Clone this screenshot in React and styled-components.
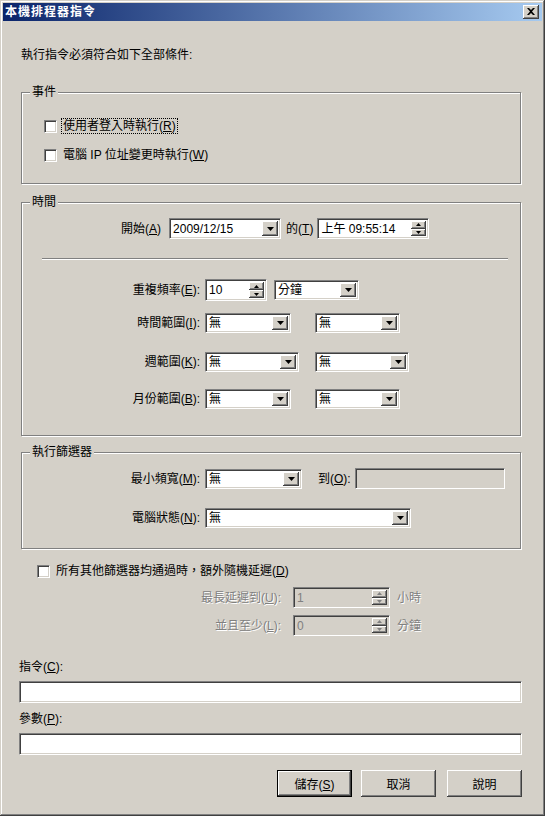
import React from 'react';
import styled, { createGlobalStyle } from 'styled-components';

const FONT = `"Liberation Sans", "Noto Sans CJK TC", sans-serif`;

const GlobalStyle = createGlobalStyle`
  html, body { margin: 0; padding: 0; background: #d4d0c8; }
  body { font-family: ${FONT}; font-size: 12px; color: #000; }
  * { box-sizing: border-box; }
`;

const raised = `
  box-shadow: inset -1px -1px 0 #404040, inset 1px 1px 0 #fff,
    inset -2px -2px 0 #808080, inset 2px 2px 0 #d4d0c8;
`;

const Window = styled.div`
  width: 545px;
  height: 816px;
  padding: 3px;
  background: #d4d0c8;
  box-shadow: inset -1px -1px 0 #404040, inset 1px 1px 0 #d4d0c8,
    inset -2px -2px 0 #808080, inset 2px 2px 0 #fff;
  display: flex;
  flex-direction: column;
  font-family: ${FONT};
  font-size: 12px;
  line-height: 14px;
  color: #000;
`;

const TitleBar = styled.div`
  height: 18px;
  flex: none;
  display: flex;
  align-items: center;
  justify-content: space-between;
  padding: 0 3px 0 2px;
  background: linear-gradient(90deg, #0a246a, #a6caf0);
`;

const Title = styled.span`
  color: #fff;
  font-weight: bold;
  font-size: 12px;
  letter-spacing: 1px;
  line-height: 18px;
`;

const CloseButton = styled.div`
  width: 16px;
  height: 14px;
  background: #d4d0c8;
  ${raised}
  display: flex;
  align-items: center;
  justify-content: center;
  padding-bottom: 1px;
`;

const Body = styled.div`
  flex: 1;
  display: flex;
  flex-direction: column;
  padding: 0 20px 0 16px;
`;

const Intro = styled.div`
  margin-top: 27px;
  padding-left: 2px;
`;

const Group = styled.fieldset`
  margin: ${(p) => p.$mt}px 1px 0 2px;
  padding: ${(p) => p.$pt}px 0 ${(p) => p.$pb}px 0;
  border: 1px solid #808080;
  box-shadow: 1px 1px 0 #fff, inset 1px 1px 0 #fff;
  min-width: 0;
`;

const Legend = styled.legend`
  margin-left: 8px;
  padding: 0 2px;
  line-height: 14px;
  background: #d4d0c8;
`;

const CheckList = styled.div`
  display: flex;
  flex-direction: column;
  gap: 13px;
`;

const CheckRow = styled.label`
  display: flex;
  align-items: center;
  gap: 5px;
  height: 16px;
  margin-top: ${(p) => p.$mt || 0}px;
  padding-left: ${(p) => p.$indent}px;
`;

const Check = styled.span`
  flex: none;
  width: 13px;
  height: 13px;
  background: #fff;
  border-top: 1px solid #808080;
  border-left: 1px solid #808080;
  border-right: 1px solid #fff;
  border-bottom: 1px solid #fff;
  box-shadow: inset 1px 1px 0 #404040, inset -1px -1px 0 #d4d0c8;
`;

const CheckText = styled.span`
  padding: 0 1px;
  outline: ${(p) => (p.$focused ? '1px dotted #000' : 'none')};
  outline-offset: 0;
`;

const Row = styled.div`
  display: flex;
  align-items: center;
  height: ${(p) => p.$h || 21}px;
  margin-top: ${(p) => p.$mt || 0}px;
  padding-left: ${(p) => p.$indent || 0}px;
`;

const RowLabel = styled.span`
  flex: none;
  width: ${(p) => p.$w}px;
  text-align: right;
  margin-right: ${(p) => p.$gap}px;
  white-space: nowrap;
  color: ${(p) => (p.$disabled ? '#808080' : '#000')};
  text-shadow: ${(p) => (p.$disabled ? '1px 1px 0 #fff' : 'none')};
`;

const Inline = styled.span`
  flex: none;
  margin: 0 ${(p) => p.$mr || 0}px 0 ${(p) => p.$ml || 0}px;
  white-space: nowrap;
  color: ${(p) => (p.$disabled ? '#808080' : '#000')};
  text-shadow: ${(p) => (p.$disabled ? '1px 1px 0 #fff' : 'none')};
`;

const Sunken = styled.div`
  flex: none;
  width: ${(p) => (p.$w ? `${p.$w}px` : 'auto')};
  height: ${(p) => p.$h || 21}px;
  margin-left: ${(p) => p.$ml || 0}px;
  display: flex;
  align-items: stretch;
  padding: 2px;
  background: ${(p) => (p.$disabled ? '#d4d0c8' : '#fff')};
  border-top: 1px solid #808080;
  border-left: 1px solid #808080;
  border-right: 1px solid #fff;
  border-bottom: 1px solid #fff;
  box-shadow: inset 1px 1px 0 #404040, inset -1px -1px 0 #d4d0c8;
`;

const FieldText = styled.span`
  flex: 1;
  display: flex;
  align-items: center;
  padding-left: 1px;
  white-space: nowrap;
  overflow: hidden;
  color: ${(p) => (p.$disabled ? '#808080' : '#000')};
`;

const DropButton = styled.span`
  flex: none;
  width: 16px;
  background: #d4d0c8;
  ${raised}
  display: flex;
  align-items: center;
  justify-content: center;
`;

const SpinColumn = styled.span`
  flex: none;
  width: 15px;
  display: flex;
  flex-direction: column;
`;

const SpinHalf = styled.span`
  flex: 1;
  background: #d4d0c8;
  ${raised}
  display: flex;
  align-items: center;
  justify-content: center;
`;

const WideField = styled.div`
  height: 22px;
  margin-top: ${(p) => p.$mt}px;
  background: #fff;
  border-top: 1px solid #808080;
  border-left: 1px solid #808080;
  border-right: 1px solid #fff;
  border-bottom: 1px solid #fff;
  box-shadow: inset 1px 1px 0 #404040, inset -1px -1px 0 #d4d0c8;
`;

const FieldLabel = styled.div`
  margin-top: ${(p) => p.$mt}px;
`;

const Separator = styled.div`
  margin: 19px 12px 0 20px;
  height: 2px;
  border-top: 1px solid #808080;
  border-bottom: 1px solid #fff;
`;

const ButtonBar = styled.div`
  margin-top: 15px;
  display: flex;
  justify-content: flex-end;
  gap: 9px;
`;

const Button = styled.button`
  width: 75px;
  height: 27px;
  margin-left: ${(p) => p.$ml || 0}px;
  padding: 0;
  font-family: ${FONT};
  font-size: 12px;
  color: #000;
  background: #d4d0c8;
  border: ${(p) => (p.$default ? '1px solid #000' : 'none')};
  ${raised}
`;

const Acc = ({ t, k, colon }) => (
  <>
    {t}(<u>{k}</u>){colon ? ':' : ''}
  </>
);

const DownArrow = () => (
  <svg width="7" height="4" viewBox="0 0 7 4">
    <path d="M0 0h7L3.5 4z" fill="#000" />
  </svg>
);

const Combo = ({ w, h = 20, value, ml }) => (
  <Sunken $w={w} $h={h} $ml={ml}>
    <FieldText>{value}</FieldText>
    <DropButton>
      <DownArrow />
    </DropButton>
  </Sunken>
);

const Spin = ({ w, h = 21, value, ml, disabled }) => {
  const c = disabled ? '#808080' : '#000';
  return (
    <Sunken $w={w} $h={h} $ml={ml} $disabled={disabled}>
      <FieldText $disabled={disabled}>{value}</FieldText>
      <SpinColumn>
        <SpinHalf>
          <svg width="5" height="3" viewBox="0 0 5 3">
            <path d="M2.5 0L5 3H0z" fill={c} />
          </svg>
        </SpinHalf>
        <SpinHalf>
          <svg width="5" height="3" viewBox="0 0 5 3">
            <path d="M0 0h5L2.5 3z" fill={c} />
          </svg>
        </SpinHalf>
      </SpinColumn>
    </Sunken>
  );
};

export default function App() {
  return (
    <>
      <GlobalStyle />
      <Window>
        <TitleBar>
          <Title>本機排程器指令</Title>
          <CloseButton>
            <svg width="8" height="7" viewBox="0 0 8 7">
              <path d="M0 0h2l2 2 2-2h2L5 3.5 8 7H6L4 5 2 7H0l3-3.5z" fill="#000" />
            </svg>
          </CloseButton>
        </TitleBar>
        <Body>
          <Intro>執行指令必須符合如下全部條件:</Intro>

          <Group $mt={23} $pt={19} $pb={20}>
            <Legend>事件</Legend>
            <CheckList>
              <CheckRow $indent={22}>
                <Check />
                <CheckText $focused>
                  <Acc t="使用者登入時執行" k="R" />
                </CheckText>
              </CheckRow>
              <CheckRow $indent={22}>
                <Check />
                <CheckText>
                  <Acc t="電腦 IP 位址變更時執行" k="W" />
                </CheckText>
              </CheckRow>
            </CheckList>
          </Group>

          <Group $mt={11} $pt={9} $pb={26}>
            <Legend>時間</Legend>
            <Row $indent={99}>
              <Inline $mr={8}>
                <Acc t="開始" k="A" />
              </Inline>
              <Combo w={112} h={21} value="2009/12/15" />
              <Inline $ml={5} $mr={4}>
                <Acc t="的" k="T" />
              </Inline>
              <Spin w={112} h={21} value="上午 09:55:14" />
            </Row>
            <Separator />
            <Row $mt={19} $h={22}>
              <RowLabel $w={178} $gap={5}>
                <Acc t="重複頻率" k="E" colon />
              </RowLabel>
              <Spin w={62} h={22} value="10" />
              <Combo w={85} h={20} ml={7} value="分鐘" />
            </Row>
            <Row $mt={12} $h={20}>
              <RowLabel $w={178} $gap={5}>
                <Acc t="時間範圍" k="I" colon />
              </RowLabel>
              <Combo w={86} value="無" />
              <Combo w={85} ml={24} value="無" />
            </Row>
            <Row $mt={19} $h={20}>
              <RowLabel $w={178} $gap={5}>
                <Acc t="週範圍" k="K" colon />
              </RowLabel>
              <Combo w={94} value="無" />
              <Combo w={94} ml={16} value="無" />
            </Row>
            <Row $mt={17} $h={20}>
              <RowLabel $w={178} $gap={5}>
                <Acc t="月份範圍" k="B" colon />
              </RowLabel>
              <Combo w={86} value="無" />
              <Combo w={85} ml={24} value="無" />
            </Row>
          </Group>

          <Group $mt={9} $pt={9} $pb={20}>
            <Legend>執行篩選器</Legend>
            <Row>
              <RowLabel $w={178} $gap={5}>
                <Acc t="最小頻寬" k="M" colon />
              </RowLabel>
              <Combo w={97} value="無" />
              <Inline $ml={16} $mr={4}>
                <Acc t="到" k="O" colon />
              </Inline>
              <Sunken $w={150} $disabled />
            </Row>
            <Row $mt={19} $h={20}>
              <RowLabel $w={178} $gap={5}>
                <Acc t="電腦狀態" k="N" colon />
              </RowLabel>
              <Combo w={206} value="無" />
            </Row>
          </Group>

          <CheckRow $indent={18} $mt={14}>
            <Check />
            <CheckText>
              <Acc t="所有其他篩選器均通過時，額外隨機延遲" k="D" />
            </CheckText>
          </CheckRow>
          <Row $mt={8}>
            <RowLabel $w={262} $gap={12} $disabled>
              <Acc t="最長延遲到" k="U" colon />
            </RowLabel>
            <Spin w={97} value="1" disabled />
            <Inline $ml={7} $disabled>
              小時
            </Inline>
          </Row>
          <Row $mt={7}>
            <RowLabel $w={262} $gap={12} $disabled>
              <Acc t="並且至少" k="L" colon />
            </RowLabel>
            <Spin w={97} value="0" disabled />
            <Inline $ml={7} $disabled>
              分鐘
            </Inline>
          </Row>

          <FieldLabel $mt={24}>
            <Acc t="指令" k="C" colon />
          </FieldLabel>
          <WideField $mt={7} />
          <FieldLabel $mt={9}>
            <Acc t="參數" k="P" colon />
          </FieldLabel>
          <WideField $mt={7} />

          <ButtonBar>
            <Button $default>
              <Acc t="儲存" k="S" />
            </Button>
            <Button>取消</Button>
            <Button $ml={2}>說明</Button>
          </ButtonBar>
        </Body>
      </Window>
    </>
  );
}
